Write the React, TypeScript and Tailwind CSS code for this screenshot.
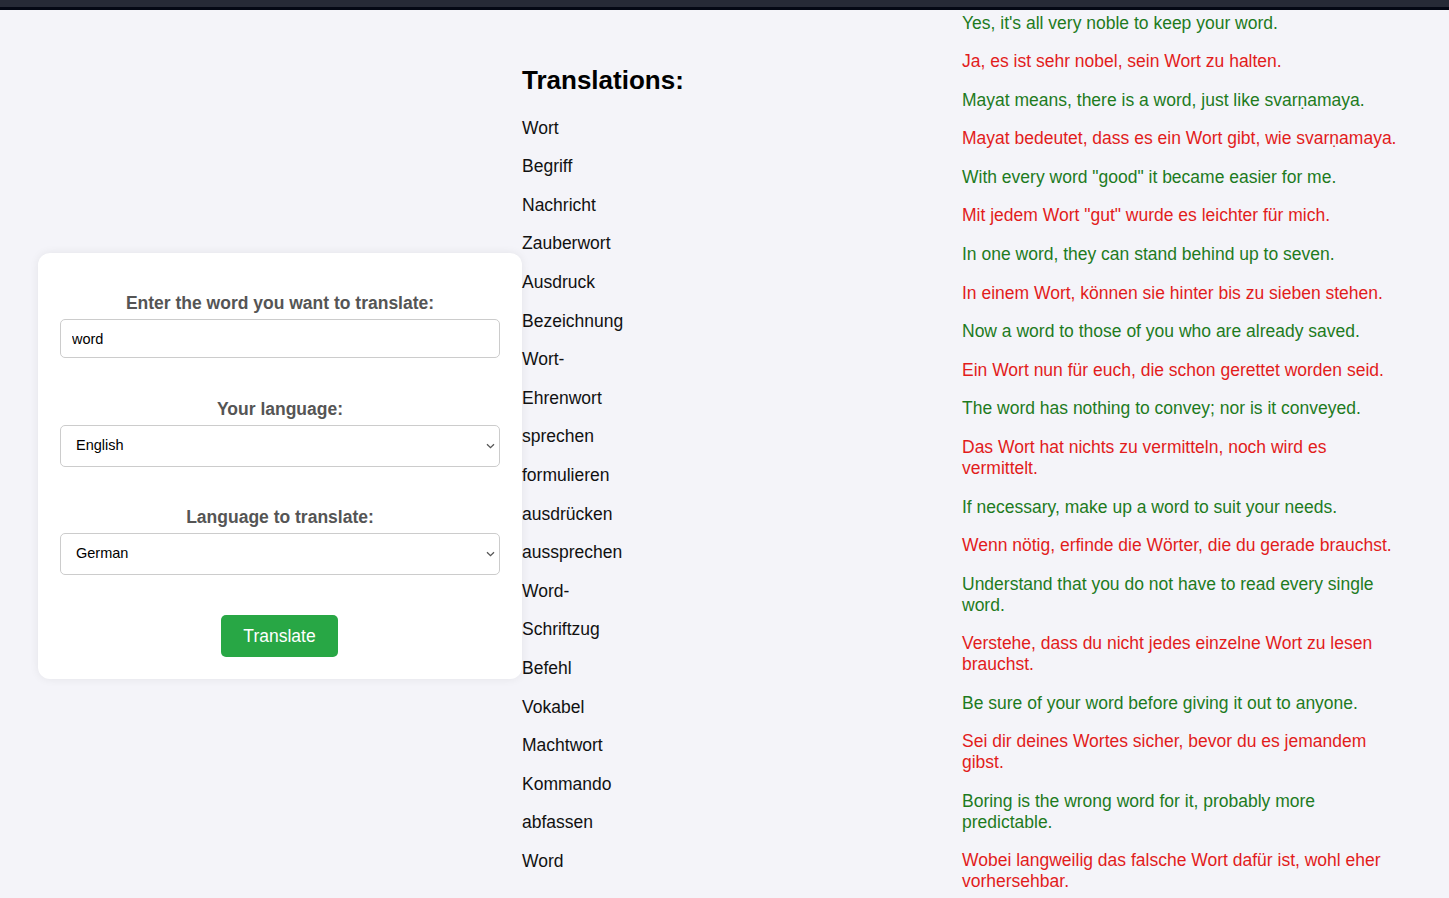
import React from "react";

const words = [
  "Wort",
  "Begriff",
  "Nachricht",
  "Zauberwort",
  "Ausdruck",
  "Bezeichnung",
  "Wort-",
  "Ehrenwort",
  "sprechen",
  "formulieren",
  "ausdrücken",
  "aussprechen",
  "Word-",
  "Schriftzug",
  "Befehl",
  "Vokabel",
  "Machtwort",
  "Kommando",
  "abfassen",
  "Word",
];

const sentences: [string, string][] = [
  ["Yes, it's all very noble to keep your word.", "Ja, es ist sehr nobel, sein Wort zu halten."],
  ["Mayat means, there is a word, just like svarṇamaya.", "Mayat bedeutet, dass es ein Wort gibt, wie svarṇamaya."],
  ['With every word "good" it became easier for me.', 'Mit jedem Wort "gut" wurde es leichter für mich.'],
  ["In one word, they can stand behind up to seven.", "In einem Wort, können sie hinter bis zu sieben stehen."],
  ["Now a word to those of you who are already saved.", "Ein Wort nun für euch, die schon gerettet worden seid."],
  ["The word has nothing to convey; nor is it conveyed.", "Das Wort hat nichts zu vermitteln, noch wird es vermittelt."],
  ["If necessary, make up a word to suit your needs.", "Wenn nötig, erfinde die Wörter, die du gerade brauchst."],
  ["Understand that you do not have to read every single word.", "Verstehe, dass du nicht jedes einzelne Wort zu lesen brauchst."],
  ["Be sure of your word before giving it out to anyone.", "Sei dir deines Wortes sicher, bevor du es jemandem gibst."],
  ["Boring is the wrong word for it, probably more predictable.", "Wobei langweilig das falsche Wort dafür ist, wohl eher vorhersehbar."],
];

function Chevron() {
  return (
    <svg
      className="pointer-events-none absolute right-[5px] top-1/2 -translate-y-1/2"
      width="9"
      height="6"
      viewBox="0 0 9 6"
      fill="none"
    >
      <path d="M1 1.2 L4.5 4.6 L8 1.2" stroke="#555" strokeWidth="1.3" />
    </svg>
  );
}

function SelectBox({ value, options }: { value: string; options: string[] }) {
  return (
    <div className="relative mt-[5px]">
      <select
        defaultValue={value}
        className="block h-[42px] w-full appearance-none rounded-[5px] border border-[#cccccc] bg-white pl-[15px] text-[14.5px] text-black outline-none"
      >
        {options.map((o) => (
          <option key={o}>{o}</option>
        ))}
      </select>
      <Chevron />
    </div>
  );
}

export default function App() {
  const langs = ["English", "German", "French", "Spanish", "Italian"];
  const label = "pt-[1px] text-center text-[17.5px] font-bold leading-[21px] text-[#555555]";
  return (
    <div
      className="h-[898px] overflow-hidden bg-[#f4f4f9]"
      style={{ fontFamily: '"Liberation Sans", Arial, Helvetica, sans-serif' }}
    >
      <div className="h-[7px] bg-[#262a36]" />
      <div className="h-[3px] bg-[#040814]" />
      <div className="flex items-start pl-[38px]">
        {/* Form card */}
        <div className="mt-[243px] w-[484px] shrink-0 rounded-[12px] bg-white px-[22px] pb-[22px] pt-[39px] shadow-[0_0_10px_rgba(0,0,0,0.07)]">
          <div className={label}>Enter the word you want to translate:</div>
          <input
            defaultValue="word"
            className="mt-[5px] block h-[39px] w-full rounded-[5px] border border-[#cccccc] bg-white px-[11px] text-[14.5px] text-black outline-none"
          />
          <div className={`mt-[40px] ${label}`}>Your language:</div>
          <SelectBox value="English" options={langs} />
          <div className={`mt-[39px] ${label}`}>Language to translate:</div>
          <SelectBox value="German" options={langs} />
          <div className="mt-[40px] flex justify-center">
            <button className="-ml-[1px] h-[42px] w-[117px] rounded-[5px] bg-[#28a745] text-[17.5px] text-white">
              Translate
            </button>
          </div>
        </div>

        {/* Translations list */}
        <div className="mt-[55px] w-[440px] shrink-0">
          <h2 className="text-[26px] font-bold leading-[30px] text-black">Translations:</h2>
          <div className="mt-[22.6px] flex flex-col gap-[18px]">
            {words.map((w) => (
              <p key={w} className="text-[17.5px] leading-[20.6px] text-[#111111]">
                {w}
              </p>
            ))}
          </div>
        </div>

        {/* Example sentences */}
        <div className="mt-[2.5px] flex w-[441px] shrink-0 flex-col gap-[17.7px]">
          {sentences.map(([en, de]) => (
            <React.Fragment key={en}>
              <p className="text-[17.5px] leading-[20.9px] text-[#1e7b1e]">{en}</p>
              <p className="text-[17.5px] leading-[20.9px] text-[#e21c1c]">{de}</p>
            </React.Fragment>
          ))}
        </div>
      </div>
    </div>
  );
}
